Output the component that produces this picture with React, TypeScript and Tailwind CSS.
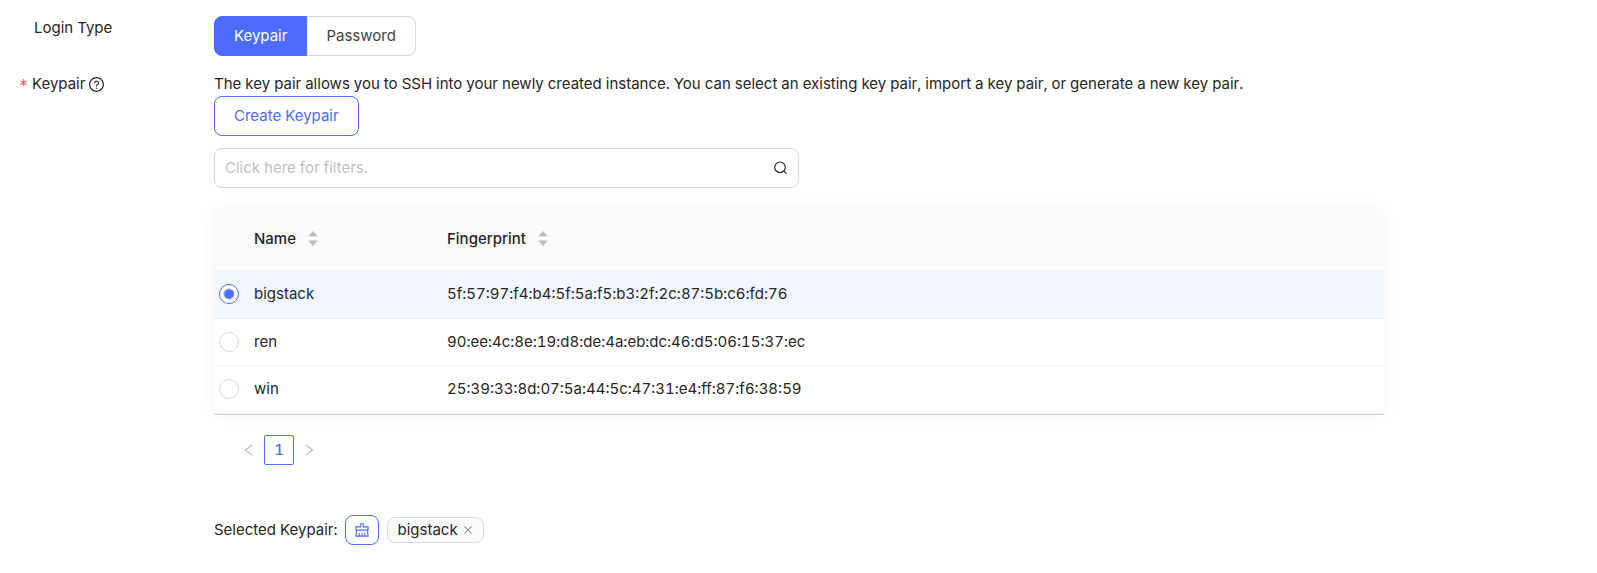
import { useState } from 'react';
import { AiOutlineClose, AiOutlineLeft, AiOutlineQuestionCircle, AiOutlineRight } from 'react-icons/ai';
import clsx from 'clsx';

interface Keypair {
  name: string;
  fingerprint: string;
}

const keypairs: Keypair[] = [
  { name: 'bigstack', fingerprint: '5f:57:97:f4:b4:5f:5a:f5:b3:2f:2c:87:5b:c6:fd:76' },
  { name: 'ren', fingerprint: '90:ee:4c:8e:19:d8:de:4a:eb:dc:46:d5:06:15:37:ec' },
  { name: 'win', fingerprint: '25:39:33:8d:07:5a:44:5c:47:31:e4:ff:87:f6:38:59' },
];

const loginTypes = ['Keypair', 'Password'];

function SearchIcon() {
  return (
    <svg viewBox="0 0 15 15" className="size-[15px]" fill="none" stroke="currentColor" strokeWidth="1.2">
      <circle cx="7" cy="6.3" r="5.3" />
      <path d="M10.8 10.1 13.6 12.9" />
    </svg>
  );
}

function ClearIcon() {
  return (
    <svg viewBox="0 0 14 14" className="size-[14px]" fill="none" stroke="currentColor" strokeWidth="1.1">
      <path d="M5.8 3.9V.8h2.4v3.1h4.9v3.2H.9V3.9z" />
      <path d="M1.6 7.1.9 13.1h12.2l-.7-6M4.2 13V9.8M7 13V9.8M9.8 13V9.8" />
    </svg>
  );
}

function SortHeader({ title }: { title: string }) {
  return (
    <button type="button" className="flex items-center gap-3 font-medium">
      {title}
      <svg viewBox="0 0 10 15" className="h-[15px] w-[10px]" fill="#bfbfbf">
        <path d="M5 0 9.8 5.4H.2z" />
        <path d="M5 15 9.8 9.6H.2z" />
      </svg>
    </button>
  );
}

function LoginTypeSwitch() {
  const [type, setType] = useState('Keypair');

  return (
    <div className="flex">
      {loginTypes.map((item) => (
        <button
          key={item}
          type="button"
          onClick={() => setType(item)}
          className={clsx(
            'h-10 border px-[19px] first:rounded-l-lg last:rounded-r-lg last:border-l-0',
            type === item
              ? 'border-[#4d6bfe] bg-[#4d6bfe] text-white'
              : 'border-[#d9d9d9] bg-white text-[#404252]',
          )}
        >
          {item}
        </button>
      ))}
    </div>
  );
}

function KeypairTable({ selected, onSelect }: { selected: string | null; onSelect: (name: string) => void }) {
  return (
    <div className="rounded-t-xl border-b border-[#d5d6e2] shadow-[0_0_16px_rgba(0,0,0,0.05)]">
      <table className="w-full table-fixed text-left">
        <thead>
          <tr className="h-[62px]">
            <th className="w-[30px] rounded-tl-xl border-b border-[#f0f0f0] bg-[#fafafa]" />
            <th className="w-[193px] border-b border-[#f0f0f0] bg-[#fafafa] px-[10px]">
              <SortHeader title="Name" />
            </th>
            <th className="rounded-tr-xl border-b border-[#f0f0f0] bg-[#fafafa] px-[10px]">
              <SortHeader title="Fingerprint" />
            </th>
          </tr>
        </thead>
        <tbody>
          {keypairs.map(({ name, fingerprint }) => {
            const active = name === selected;
            return (
              <tr
                key={name}
                className={clsx(
                  'h-[47px] border-b first:h-12 last:h-12',
                  active ? 'border-[#e6eeff] bg-[#f1f6ff]' : 'border-[#f0f0f0] bg-white',
                )}
              >
                <td className="px-[5px]">
                  <input
                    type="radio"
                    name="keypair"
                    aria-label={name}
                    checked={active}
                    onChange={() => onSelect(name)}
                    className="block size-5 appearance-none rounded-full border border-[#d9d9d9] bg-white checked:border-[#4d6bfe] checked:bg-[radial-gradient(circle,#4d6bfe_4px,white_6px)]"
                  />
                </td>
                <td className="px-[10px]">{name}</td>
                <td className="px-[10px]">{fingerprint}</td>
              </tr>
            );
          })}
        </tbody>
      </table>
    </div>
  );
}

export default function App() {
  const [selected, setSelected] = useState<string | null>('bigstack');

  return (
    <main className="bg-white pt-4 pr-[18px] pl-[19px] font-['Inter',sans-serif] text-[15px] leading-6 text-[#262626] tabular-nums">
      <div className="grid grid-cols-[1fr_6fr_1fr] gap-y-3">
        <div className="pl-[15px]">Login Type</div>
        <LoginTypeSwitch />
        <div />

        <div className="flex items-center gap-1 self-start pt-1">
          <span className="w-[9px] pt-1 font-['DejaVu_Sans_Mono',monospace] leading-5 text-[#ff4d4f]">*</span>
          <span>Keypair</span>
          <AiOutlineQuestionCircle className="-ml-px size-[17px]" />
        </div>
        <div className="pt-1">
          <p>The key pair allows you to SSH into your newly created instance. You can select an existing key pair, import a key pair, or generate a new key pair.</p>
          <button type="button" className="block h-10 rounded-lg border border-[#4d6bfe] px-[19px] text-[#4d6bfe]">
            Create Keypair
          </button>
          <div className="mt-3 flex h-10 w-1/2 items-center rounded-lg border border-[#d9d9d9] px-[10px]">
            <input
              type="text"
              aria-label="Filters"
              placeholder="Click here for filters."
              className="min-w-0 flex-1 outline-none placeholder:text-[#bfbfbf]"
            />
            <SearchIcon />
          </div>

          <div className="mt-5">
            <KeypairTable selected={selected} onSelect={setSelected} />
          </div>

          <nav className="mt-5 flex items-center pl-5 text-[#bfbfbf]">
            <button type="button" aria-label="Previous page" className="grid h-[30px] w-[30px] place-items-center">
              <AiOutlineLeft className="size-4" />
            </button>
            <button type="button" className="h-[30px] w-[30px] rounded-xs border border-[#4d6bfe] font-medium text-[#4d6bfe]">
              1
            </button>
            <button type="button" aria-label="Next page" className="grid h-[30px] w-[30px] place-items-center">
              <AiOutlineRight className="size-4" />
            </button>
          </nav>

          <div className="mt-[50px] flex items-center gap-2">
            <span>Selected Keypair:</span>
            <button
              type="button"
              aria-label="Clear selection"
              onClick={() => setSelected(null)}
              className="grid h-[30px] w-[34px] place-items-center rounded-lg border border-[#4d6bfe] text-[#4d6bfe]"
            >
              <ClearIcon />
            </button>
            {selected && (
              <span className="flex items-center gap-1 rounded-lg border border-[#d9d9d9] bg-[#fafafa] px-[9px]">
                {selected}
                <button type="button" aria-label={`Remove ${selected}`} onClick={() => setSelected(null)}>
                  <AiOutlineClose className="size-3 text-[#8c8c8c]" />
                </button>
              </span>
            )}
          </div>
        </div>
      </div>
    </main>
  );
}
